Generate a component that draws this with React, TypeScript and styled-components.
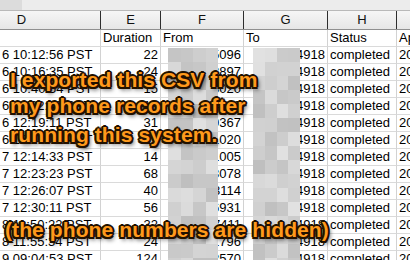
import React from 'react';
import styled, { createGlobalStyle } from 'styled-components';

const GlobalStyle = createGlobalStyle`
  body {
    margin: 0;
    background: #ffffff;
  }
`;

const Sheet = styled.div`
  position: relative;
  width: 410px;
  height: 260px;
  overflow: hidden;
  background: #ffffff;
  font-family: 'Liberation Sans', Arial, sans-serif;
`;

const TopStrip = styled.div`
  display: flex;
  height: 10px;
  border-bottom: 1px solid #b9b9b9;
`;

const StripPart = styled.div<{ $w?: number; $bg: string }>`
  width: ${(p) => (p.$w ? `${p.$w}px` : 'auto')};
  flex: ${(p) => (p.$w ? '0 0 auto' : '1')};
  background: ${(p) => p.$bg};
`;

const cols = '101px 60px 83px 84px 69px 13px';

const HeaderRow = styled.div`
  display: grid;
  grid-template-columns: ${cols};
  height: 19px;
  box-sizing: border-box;
  border-bottom: 1px solid #8f8f8f;
  background: linear-gradient(#f6f6f6, #e6e6e6);
`;

const HeaderCell = styled.div<{ $shift?: number }>`
  box-sizing: border-box;
  border-right: 1px solid #2e2e2e;
  font-size: 13px;
  line-height: 18px;
  color: #111;
  text-align: center;
  padding-right: ${(p) => p.$shift || 0}px;
  &:last-child {
    border-right: none;
  }
`;

const Row = styled.div`
  display: grid;
  grid-template-columns: ${cols};
  height: 17px;
`;

const Cell = styled.div<{ $align?: 'left' | 'right' }>`
  box-sizing: border-box;
  border-right: 1px solid #d2d2d2;
  border-bottom: 1px solid #dadada;
  font-size: 13px;
  line-height: 16px;
  color: #000;
  white-space: nowrap;
  overflow: hidden;
  text-align: ${(p) => p.$align || 'left'};
  padding: 0 2px;
  &:last-child {
    border-right: none;
  }
`;

const Mosaic = styled.div<{ $left: number; $width: number }>`
  position: absolute;
  left: ${(p) => p.$left}px;
  top: 48px;
  width: ${(p) => p.$width}px;
  bottom: 0;
  display: grid;
  grid-template-columns: repeat(4, 1fr);
  grid-auto-rows: 14px;
  overflow: hidden;
`;

const Tile = styled.div``;

const Caption = styled.div<{ $left: number; $top: number }>`
  position: absolute;
  left: ${(p) => p.$left}px;
  top: ${(p) => p.$top}px;
  font-family: 'Liberation Sans', Arial, sans-serif;
  font-weight: bold;
  font-size: 21px;
  letter-spacing: 0.1px;
  line-height: 26px;
  color: #ff9a1c;
  white-space: nowrap;
  text-shadow:
    -1.5px -1.5px 0 #221100,
    1.5px -1.5px 0 #221100,
    -1.5px 1.5px 0 #221100,
    1.5px 1.5px 0 #221100,
    0 -2px 0 #221100,
    0 2px 0 #221100,
    -2px 0 0 #221100,
    2px 0 0 #221100,
    2px 3px 4px rgba(0, 0, 0, 0.8);
`;

const CaptionLine = styled.div<{ $gap?: number }>`
  margin-top: ${(p) => p.$gap || 0}px;
`;

const rows = [
  { d: '6 10:12:56 PST', e: '22', f: '5096' },
  { d: '6 10:16:35 PST', e: '24', f: '3897' },
  { d: '6 10:40:54 PST', e: '15', f: '3020' },
  { d: '6 11:02:48 PST', e: '18', f: '4413' },
  { d: '6 12:19:11 PST', e: '31', f: '0367' },
  { d: '6 12:45:02 PST', e: '27', f: '1020' },
  { d: '7 12:14:33 PST', e: '14', f: '1005' },
  { d: '7 12:23:23 PST', e: '68', f: '3078' },
  { d: '7 12:26:07 PST', e: '40', f: '3114' },
  { d: '7 12:30:11 PST', e: '56', f: '6931' },
  { d: '8 11:50:22 PST', e: '32', f: '7411' },
  { d: '8 11:55:34 PST', e: '24', f: '1796' },
  { d: '9 09:04:53 PST', e: '124', f: '2570' },
];

// grey shades for the pixelated blocks, picked pseudo-randomly
const shade = (i: number, seed: number) => {
  const v = Math.abs(Math.sin(i * 12.9898 + seed * 78.233) * 43758.5453) % 1;
  const g = Math.round(190 + v * 36);
  return `rgb(${g},${g},${g})`;
};

const MosaicBlock = ({ left, width, seed }: { left: number; width: number; seed: number }) => (
  <Mosaic $left={left} $width={width}>
    {Array.from({ length: 64 }).map((_, i) => (
      <Tile key={i} style={{ background: shade(i, seed) }} />
    ))}
  </Mosaic>
);

export default function App() {
  return (
    <Sheet>
      <GlobalStyle />
      <TopStrip>
        <StripPart $w={22} $bg="#dcdcdc" />
        <StripPart $bg="#ececec" />
      </TopStrip>
      <HeaderRow>
        <HeaderCell $shift={57}>D</HeaderCell>
        <HeaderCell>E</HeaderCell>
        <HeaderCell>F</HeaderCell>
        <HeaderCell>G</HeaderCell>
        <HeaderCell>H</HeaderCell>
        <HeaderCell />
      </HeaderRow>
      <Row>
        <Cell />
        <Cell>Duration</Cell>
        <Cell>From</Cell>
        <Cell>To</Cell>
        <Cell>Status</Cell>
        <Cell>Ap</Cell>
      </Row>
      {rows.map((r) => (
        <Row key={r.d}>
          <Cell>{r.d}</Cell>
          <Cell $align="right">{r.e}</Cell>
          <Cell $align="right">{r.f}</Cell>
          <Cell $align="right">4918</Cell>
          <Cell>completed</Cell>
          <Cell>20</Cell>
        </Row>
      ))}
      <MosaicBlock left={168} width={50} seed={1} />
      <MosaicBlock left={253} width={47} seed={2} />
      <Caption $left={10} $top={67}>
        <CaptionLine>I exported this CSV from</CaptionLine>
        <CaptionLine>my phone records after</CaptionLine>
        <CaptionLine $gap={3}>running this system.</CaptionLine>
      </Caption>
      <Caption $left={5} $top={217}>
        <CaptionLine>(the phone numbers are hidden)</CaptionLine>
      </Caption>
    </Sheet>
  );
}
